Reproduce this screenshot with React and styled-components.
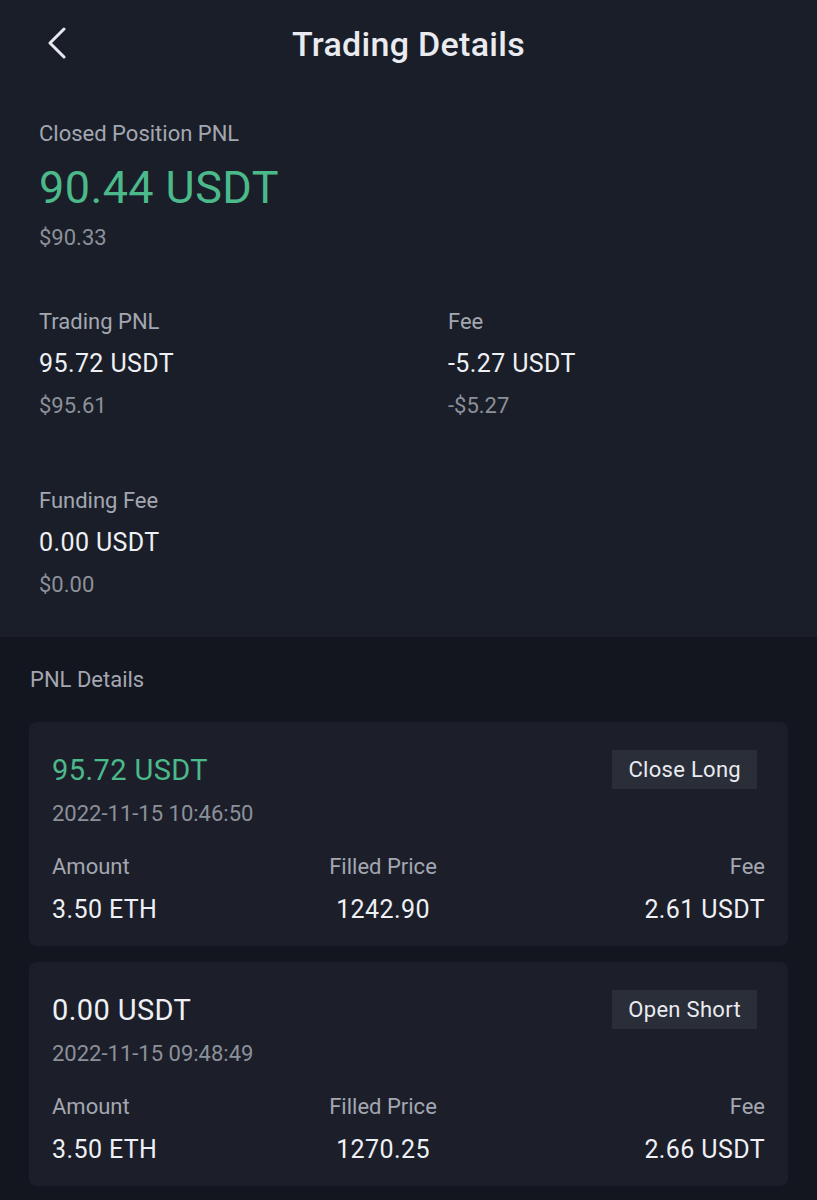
import React from 'react'
import styled, { createGlobalStyle } from 'styled-components'

const GlobalStyle = createGlobalStyle`
  html, body {
    margin: 0;
    padding: 0;
    background: #13161e;
  }
  body {
    font-family: Roboto, "Noto Sans", sans-serif;
    -webkit-font-smoothing: antialiased;
  }
`

const fills = [
  {
    pnl: '95.72 USDT',
    positive: true,
    side: 'Close Long',
    time: '2022-11-15 10:46:50',
    amount: '3.50 ETH',
    price: '1242.90',
    fee: '2.61 USDT',
  },
  {
    pnl: '0.00 USDT',
    positive: false,
    side: 'Open Short',
    time: '2022-11-15 09:48:49',
    amount: '3.50 ETH',
    price: '1270.25',
    fee: '2.66 USDT',
  },
]

function Stat({ label, value, usd }) {
  return (
    <StatBox>
      <Label>{label}</Label>
      <Value>{value}</Value>
      <Usd>{usd}</Usd>
    </StatBox>
  )
}

function FillCard({ fill }) {
  return (
    <Card>
      <CardHead>
        <div>
          <CardPnl $positive={fill.positive}>{fill.pnl}</CardPnl>
          <Time>{fill.time}</Time>
        </div>
        <Badge>{fill.side}</Badge>
      </CardHead>
      <CardGrid>
        <Cell>
          <CellLabel>Amount</CellLabel>
          <CellValue>{fill.amount}</CellValue>
        </Cell>
        <Cell $align="center">
          <CellLabel>Filled Price</CellLabel>
          <CellValue>{fill.price}</CellValue>
        </Cell>
        <Cell $align="flex-end">
          <CellLabel>Fee</CellLabel>
          <CellValue>{fill.fee}</CellValue>
        </Cell>
      </CardGrid>
    </Card>
  )
}

export default function App() {
  return (
    <Page>
      <GlobalStyle />
      <Top>
        <Header>
          <Back>
            <svg width="22" height="32" viewBox="0 0 22 32" fill="none">
              <path d="M18 2 L4 16 L18 30" stroke="#e6e8ee" strokeWidth="3" strokeLinecap="round" strokeLinejoin="round" />
            </svg>
          </Back>
          <Title>Trading Details</Title>
        </Header>
        <Summary>
          <Label>Closed Position PNL</Label>
          <Big>90.44 USDT</Big>
          <Usd>$90.33</Usd>
        </Summary>
        <StatGrid>
          <Stat label="Trading PNL" value="95.72 USDT" usd="$95.61" />
          <Stat label="Fee" value="-5.27 USDT" usd="-$5.27" />
          <Stat label="Funding Fee" value="0.00 USDT" usd="$0.00" />
        </StatGrid>
      </Top>
      <Bottom>
        <SectionTitle>PNL Details</SectionTitle>
        {fills.map((f) => (
          <FillCard key={f.time} fill={f} />
        ))}
      </Bottom>
    </Page>
  )
}

const Page = styled.div`
  width: 817px;
  min-height: 1200px;
  background: #13161e;
`

const Top = styled.div`
  background: #1a1e28;
  padding-bottom: 38px;
`

const Header = styled.div`
  position: relative;
  height: 88px;
  display: flex;
  align-items: center;
  justify-content: center;
`

const Back = styled.div`
  position: absolute;
  left: 46px;
  top: 27px;
  display: flex;
`

const Title = styled.div`
  color: #e9ebf0;
  font-size: 34px;
  font-weight: 500;
  letter-spacing: 0.3px;
`

const Summary = styled.div`
  padding: 32px 39px 0;
  display: flex;
  flex-direction: column;
`

const Label = styled.div`
  color: #a3a7b1;
  font-size: 22px;
  line-height: 28px;
`

const Big = styled.div`
  color: #4cb98b;
  font-size: 45px;
  font-weight: 400;
  letter-spacing: 0.4px;
  line-height: 54px;
  margin-top: 13px;
`

const Usd = styled.div`
  color: #8c909a;
  font-size: 22px;
  line-height: 28px;
  margin-top: 9px;
`

const StatGrid = styled.div`
  display: grid;
  grid-template-columns: 409px 1fr;
  row-gap: 67px;
  padding: 56px 39px 0;
`

const StatBox = styled.div`
  display: flex;
  flex-direction: column;
  gap: 12px;

  ${Usd} {
    margin-top: 0;
  }
`

const Value = styled.div`
  color: #eef0f4;
  font-size: 25px;
  line-height: 32px;
  letter-spacing: 0.4px;
`

const Bottom = styled.div`
  padding: 28px 29px 13px;
  display: flex;
  flex-direction: column;
  gap: 16px;
`

const SectionTitle = styled.div`
  color: #a3a7b1;
  font-size: 22px;
  line-height: 30px;
  padding-left: 1px;
  margin-bottom: 11px;
`

const Card = styled.div`
  background: #1c1f2a;
  border-radius: 8px;
  padding: 29px 23px 20px;
`

const CardHead = styled.div`
  display: flex;
  justify-content: space-between;
  align-items: flex-start;
`

const CardPnl = styled.div`
  color: ${(p) => (p.$positive ? '#4cb98b' : '#eef0f4')};
  font-size: 29px;
  line-height: 38px;
  letter-spacing: 0.4px;
`

const Time = styled.div`
  color: #8c909a;
  font-size: 22px;
  line-height: 28px;
  margin-top: 11px;
`

const Badge = styled.div`
  background: #2a2e39;
  color: #e9ebf0;
  font-size: 22px;
  letter-spacing: 0.3px;
  padding: 0 16px;
  height: 39px;
  line-height: 39px;
  margin-top: -1px;
  margin-right: 8px;
`

const CardGrid = styled.div`
  display: grid;
  grid-template-columns: 231px 200px 1fr;
  margin-top: 25px;
`

const Cell = styled.div`
  display: flex;
  flex-direction: column;
  align-items: ${(p) => p.$align || 'flex-start'};
  gap: 13px;
`

const CellLabel = styled.div`
  color: #a3a7b1;
  font-size: 22px;
  line-height: 28px;
`

const CellValue = styled.div`
  color: #eef0f4;
  font-size: 25px;
  line-height: 32px;
  letter-spacing: 0.4px;
`
